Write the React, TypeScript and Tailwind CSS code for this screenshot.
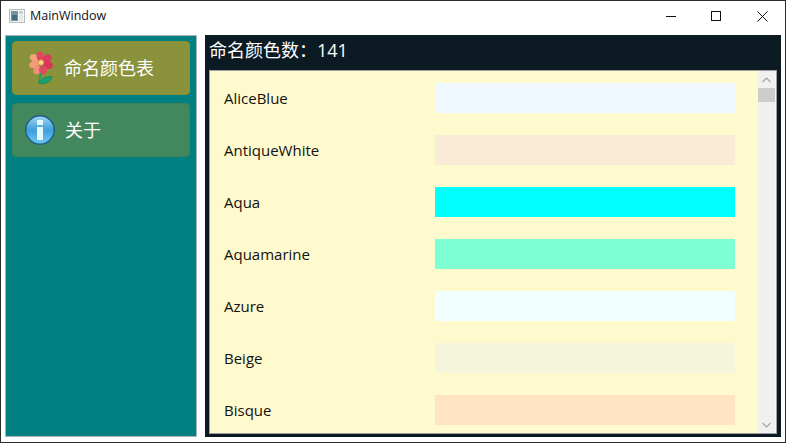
const colors = [
  ["AliceBlue", "bg-[#f0f8ff]"],
  ["AntiqueWhite", "bg-[#faebd7]"],
  ["Aqua", "bg-[#00ffff]"],
  ["Aquamarine", "bg-[#7fffd4]"],
  ["Azure", "bg-[#f0ffff]"],
  ["Beige", "bg-[#f5f5dc]"],
  ["Bisque", "bg-[#ffe4c4]"],
]

function AppIcon() {
  return (
    <svg width="16" height="14" viewBox="0 0 16 14">
      <rect x="0.5" y="0.5" width="15" height="13" fill="#f2f4f5" stroke="#b4babe" />
      <rect x="2" y="2" width="7" height="10" fill="#6f97a1" />
      <rect x="3" y="6" width="5" height="5" fill="#3f6f7c" />
      <rect x="10" y="2" width="4" height="3" fill="#c8d0d4" />
      <rect x="10" y="6" width="4" height="6" fill="#e3e7e9" />
    </svg>
  )
}

function FlowerIcon() {
  return (
    <svg width="26" height="34" viewBox="0 0 26 34">
      <path d="M13 20 L11 31" stroke="#12a06c" strokeWidth="1.6" fill="none" />
      <path d="M11 32.5 C12 28 17 25.5 24 25.5 C24 29 19 34 11 32.5 Z" fill="#16a374" stroke="#0c7a58" strokeWidth="0.6" />
      <ellipse cx="6.5" cy="7" rx="5" ry="3.6" fill="#f5a27e" transform="rotate(25 6.5 7)" />
      <ellipse cx="6" cy="13.5" rx="5" ry="3.6" fill="#f49b78" transform="rotate(-15 6 13.5)" />
      <ellipse cx="9" cy="19" rx="3.5" ry="4.5" fill="#f08d72" transform="rotate(20 9 19)" />
      <ellipse cx="12" cy="5" rx="3.5" ry="4.5" fill="#e2475f" />
      <ellipse cx="19" cy="7.5" rx="5" ry="3.8" fill="#dc3c5c" transform="rotate(-35 19 7.5)" />
      <ellipse cx="20" cy="14" rx="5" ry="4" fill="#d9375a" transform="rotate(15 20 14)" />
      <ellipse cx="15" cy="19" rx="4" ry="4.5" fill="#e04a62" transform="rotate(-15 15 19)" />
      <circle cx="13" cy="11.5" r="2.6" fill="#f6d477" stroke="#e79a5c" strokeWidth="0.6" />
    </svg>
  )
}

function InfoIcon() {
  return (
    <svg width="30" height="30" viewBox="0 0 30 30">
      <defs>
        <linearGradient id="infoFill" x1="0" y1="0" x2="0" y2="1">
          <stop offset="0" stopColor="#a5d8f3" />
          <stop offset="0.5" stopColor="#3d9fdb" />
          <stop offset="1" stopColor="#74c6ee" />
        </linearGradient>
      </defs>
      <circle cx="15" cy="15" r="14.2" fill="url(#infoFill)" stroke="#1c5f8c" strokeWidth="1.4" />
      <rect x="12" y="5" width="6" height="5" fill="#e4f9ff" />
      <rect x="12" y="12" width="6" height="13" fill="#e4f9ff" />
    </svg>
  )
}

function ScrollBar() {
  return (
    <div className="flex w-[17px] shrink-0 flex-col bg-[#f0f0f0]">
      <div className="flex h-[17px] items-center justify-center">
        <svg width="9" height="6" viewBox="0 0 9 6">
          <path d="M0.5 5 L4.5 1 L8.5 5" stroke="#a3a3a3" strokeWidth="1.2" fill="none" />
        </svg>
      </div>
      <div className="h-[14px] bg-[#cdcdcd]" />
      <div className="flex-1" />
      <div className="flex h-[17px] items-center justify-center">
        <svg width="9" height="6" viewBox="0 0 9 6">
          <path d="M0.5 1 L4.5 5 L8.5 1" stroke="#a3a3a3" strokeWidth="1.2" fill="none" />
        </svg>
      </div>
    </div>
  )
}

export default function App() {
  return (
    <div className="flex h-[443px] w-[786px] flex-col overflow-hidden border border-[#2b2b2b] bg-white font-['Open_Sans','Noto_Sans_CJK_SC',sans-serif] text-[#111]">
      <div className="flex h-[34px] shrink-0 items-center pb-[4px]">
        <div className="ml-[8px] mr-[5px]">
          <AppIcon />
        </div>
        <span className="text-[12.5px]">MainWindow</span>
        <div className="ml-auto flex h-full">
          <button className="flex h-full w-[46px] items-center justify-center pl-[2px]">
            <svg width="10" height="10" viewBox="0 0 10 10">
              <path d="M0 5.5 H10" stroke="#111" />
            </svg>
          </button>
          <button className="flex h-full w-[46px] items-center justify-center">
            <svg width="10" height="10" viewBox="0 0 10 10">
              <rect x="0.5" y="0.5" width="9" height="9" fill="none" stroke="#111" />
            </svg>
          </button>
          <button className="flex h-full w-[46px] items-center justify-center">
            <svg width="11" height="11" viewBox="0 0 11 11">
              <path d="M0.5 0.5 L10.5 10.5 M10.5 0.5 L0.5 10.5" stroke="#111" />
            </svg>
          </button>
        </div>
      </div>

      <div className="flex h-[402px] gap-[8px] pl-[4px] pr-[4px]">
        <aside className="flex w-[192px] shrink-0 flex-col gap-[8px] border border-[#a9b3bb] bg-[#008080] px-[6px] pt-[5px]">
          <button className="flex h-[54px] items-center rounded-[4px] border border-[#84903c] bg-[#8a923b] pl-[15px] text-white">
            <FlowerIcon />
            <span className="ml-[10px] mt-[1px] text-[18px]">命名颜色表</span>
          </button>
          <button className="flex h-[54px] items-center rounded-[4px] border border-[#40805a] bg-[#43875d] pl-[12px] text-white">
            <InfoIcon />
            <span className="ml-[10px] mt-[1px] text-[18px]">关于</span>
          </button>
        </aside>

        <main className="flex min-w-0 flex-1 flex-col bg-[#0b1a23] px-[4px] pb-[3px]">
          <div className="flex h-[35px] shrink-0 items-center pb-[4px] text-[18px] text-white">命名颜色数：141</div>
          <div className="flex min-h-0 flex-1 border border-[#a0a0a0] bg-[#fffacd] pr-[1px]">
            <div className="min-w-0 flex-1 overflow-hidden pt-[12px]">
              <div className="flex flex-col gap-[22px]">
                {colors.map(([name, swatch]) => (
                  <div key={name} className="flex h-[30px] shrink-0 items-center pl-[14px]">
                    <span className="w-[211px] text-[15px]">{name}</span>
                    <div className={`h-[30px] w-[300px] ${swatch}`} />
                  </div>
                ))}
              </div>
            </div>
            <ScrollBar />
          </div>
        </main>
      </div>
    </div>
  )
}
